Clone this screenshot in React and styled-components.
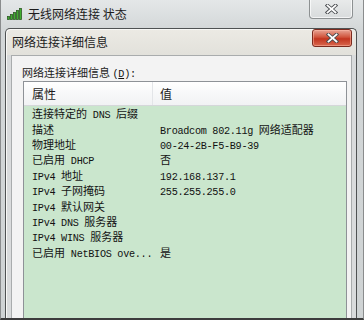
import React from 'react';
import styled, { createGlobalStyle } from 'styled-components';

const GlobalStyle = createGlobalStyle`
    html, body {
        margin: 0;
        padding: 0;
        background: #d6d9da;
    }
    * { box-sizing: border-box; }
`;

const cjk = '"Noto Sans CJK SC", "Noto Sans", sans-serif';

const OuterWindow = styled.div`
    width: 364px;
    height: 320px;
    overflow: hidden;
    display: flex;
    flex-direction: column;
    background: linear-gradient(#e4e7e8, #d3d7d8 30px, #cfd3d4);
    border-left: 1px solid #8a8c8d;
    border-right: 1px solid #8a8c8d;
    border-bottom: 2px solid #3c3c3c;
    padding: 0 6px 0 4px;
`;

const OuterTitle = styled.div`
    height: 28px;
    flex: none;
    display: flex;
    align-items: flex-start;
    padding-left: 2px;
`;

const TitleIcon = styled.svg`
    width: 16px;
    height: 12px;
    margin-top: 8px;
    flex: none;
`;

const OuterTitleText = styled.span`
    font-family: ${cjk};
    font-size: 12px;
    color: #1c1c1c;
    margin: 6px 0 0 5px;
    line-height: 16px;
`;

const CloseButton = styled.div`
    margin-left: auto;
    width: ${p => p.$w}px;
    height: ${p => p.$h}px;
    margin-top: ${p => p.$top}px;
    margin-right: ${p => p.$right}px;
    border: 1px solid ${p => (p.$red ? '#7b2a1e' : '#8d9192')};
    border-top: ${p => (p.$red ? '1px solid #7b2a1e' : 'none')};
    border-radius: ${p => (p.$red ? '3px' : '0 0 4px 4px')};
    background: ${p => (p.$red
        ? 'linear-gradient(#e8a494, #d0543c 45%, #c2351f 55%, #d9684f)'
        : 'linear-gradient(#e9ebeb, #d8dbdc)')};
    box-shadow: inset 0 0 0 1px ${p => (p.$red ? 'rgba(255,190,170,0.5)' : 'rgba(255,255,255,0.7)')};
    display: flex;
    align-items: center;
    justify-content: center;
    flex: none;
`;

const CloseGlyph = styled.svg`
    width: 13px;
    height: 10px;
`;

const InnerDialog = styled.div`
    flex: 1;
    display: flex;
    flex-direction: column;
    border: 1px solid #4f5253;
    border-bottom: none;
    border-radius: 5px 5px 0 0;
    background: linear-gradient(#eceae4, #e2e1db 26px, #d9dbdc 26px);
    padding: 0 4px 0 5px;
    box-shadow: inset 1px 1px 0 #f8f8f6;
`;

const InnerTitle = styled.div`
    height: 26px;
    flex: none;
    display: flex;
    align-items: flex-start;
`;

const InnerTitleText = styled.span`
    font-family: ${cjk};
    font-size: 12px;
    color: #1c1c1c;
    margin: 5px 0 0 1px;
    line-height: 16px;
`;

const Body = styled.div`
    flex: 1;
    background: #f3f3f3;
    border: 1px solid #a9acad;
    border-bottom: none;
    padding: 9px 4px 0 10px;
    display: flex;
    flex-direction: column;
`;

const GroupLabel = styled.div`
    font-family: ${cjk};
    font-size: 11px;
    line-height: 14px;
    color: #222;
    height: 16px;
`;

const Key = styled.span`
    text-decoration: underline;
`;

const ListView = styled.div`
    flex: 1;
    margin-left: 1px;
    border: 1px solid #8e9297;
    border-bottom: none;
    background: #cae6cd;
    display: flex;
    flex-direction: column;
`;

const HeaderRow = styled.div`
    height: 24px;
    flex: none;
    display: grid;
    grid-template-columns: 129px 1fr;
    background: linear-gradient(#ffffff, #f7f8f9 50%, #f1f2f4);
    border-bottom: 1px solid #d5d7da;
`;

const HeaderCell = styled.div`
    font-family: ${cjk};
    font-size: 12px;
    color: #1a1a1a;
    display: flex;
    align-items: center;
    padding-left: ${p => p.$pad}px;
    border-right: ${p => (p.$sep ? '1px solid #e3e5e8' : 'none')};
`;

const Row = styled.div`
    height: 15.4px;
    display: grid;
    grid-template-columns: 128px 1fr;
    padding-left: 8px;
    align-items: center;
`;

const Cell = styled.div`
    font-family: ${cjk};
    font-size: 11px;
    line-height: 13px;
    height: 13px;
    color: #141414;
    white-space: nowrap;
`;

const Lat = styled.span`
    font-family: "Liberation Mono", "DejaVu Sans Mono", monospace;
    font-size: 10.2px;
    line-height: 1;
    letter-spacing: -0.3px;
    color: #111;
`;

const rows = [
    ['连接特定的 DNS 后缀', ''],
    ['描述', 'Broadcom 802.11g 网络适配器'],
    ['物理地址', '00-24-2B-F5-B9-39'],
    ['已启用 DHCP', '否'],
    ['IPv4 地址', '192.168.137.1'],
    ['IPv4 子网掩码', '255.255.255.0'],
    ['IPv4 默认网关', ''],
    ['IPv4 DNS 服务器', ''],
    ['IPv4 WINS 服务器', ''],
    ['已启用 NetBIOS ove...', '是'],
];

function Mixed({ text }) {
    const parts = text.split(/([\u4e00-\u9fff]+)/).filter(Boolean);
    return parts.map((p, i) => (/[\u4e00-\u9fff]/.test(p) ? <span key={i}>{p}</span> : <Lat key={i}>{p}</Lat>));
}

function SignalIcon() {
    const bars = [3, 5, 7, 9, 11];
    return (
        <TitleIcon viewBox="0 0 16 12">
            {bars.map((h, i) => (
                <rect key={i} x={i * 3 + 0.5} y={11.5 - h} width="2" height={h}
                    fill="#3fae2f" stroke="#2d5a26" strokeWidth="0.8" />
            ))}
        </TitleIcon>
    );
}

function XGlyph() {
    return (
        <CloseGlyph viewBox="0 0 13 10">
            <path d="M2.5 1.5 L10.5 8.5 M10.5 1.5 L2.5 8.5" stroke="#4a4d50" strokeWidth="3.6" strokeLinecap="square" />
            <path d="M2.5 1.5 L10.5 8.5 M10.5 1.5 L2.5 8.5" stroke="#ffffff" strokeWidth="1.8" strokeLinecap="square" />
        </CloseGlyph>
    );
}

export default function App() {
    return (
        <>
            <GlobalStyle />
            <OuterWindow>
                <OuterTitle>
                    <SignalIcon />
                    <OuterTitleText>无线网络连接 状态</OuterTitleText>
                    <CloseButton $w={44} $h={20} $top={-1} $right={4}>
                        <XGlyph />
                    </CloseButton>
                </OuterTitle>
                <InnerDialog>
                    <InnerTitle>
                        <InnerTitleText>网络连接详细信息</InnerTitleText>
                        <CloseButton $red $w={40} $h={18} $top={0} $right={0}>
                            <XGlyph />
                        </CloseButton>
                    </InnerTitle>
                    <Body>
                        <GroupLabel>
                            网络连接详细信息 <Lat>(<Key>D</Key>):</Lat>
                        </GroupLabel>
                        <ListView>
                            <HeaderRow>
                                <HeaderCell $pad={8} $sep>属性</HeaderCell>
                                <HeaderCell $pad={7}>值</HeaderCell>
                            </HeaderRow>
                            {rows.map(([name, value]) => (
                                <Row key={name}>
                                    <Cell><Mixed text={name} /></Cell>
                                    <Cell><Mixed text={value} /></Cell>
                                </Row>
                            ))}
                        </ListView>
                    </Body>
                </InnerDialog>
            </OuterWindow>
        </>
    );
}
